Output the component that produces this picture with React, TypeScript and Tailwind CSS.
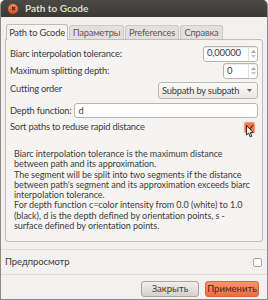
import React from "react";

const font = { fontFamily: "Lato, 'Noto Sans', sans-serif" };

function SpinEntry({ value, width }: { value: string; width: string }) {
  return (
    <div
      className={`flex h-[16px] ${width} rounded-[3px] border border-[#b8b4ae] bg-white shadow-[inset_0_1px_1px_rgba(0,0,0,0.08)]`}
    >
      <div className="flex flex-1 items-center pl-[3px] text-[9.5px] text-[#3c3c3c]">
        {value}
      </div>
      <div className="flex w-[9px] flex-col items-center justify-center gap-[2px] border-l border-[#e2e0dd]">
        <svg width="5" height="3" viewBox="0 0 5 3">
          <path d="M0 3 L2.5 0 L5 3 Z" fill="#a9a6a1" />
        </svg>
        <svg width="5" height="3" viewBox="0 0 5 3">
          <path d="M0 0 L2.5 3 L5 0 Z" fill="#c9c6c1" />
        </svg>
      </div>
    </div>
  );
}

export default function App() {
  return (
    <div
      className="flex h-[300px] w-[268px] flex-col overflow-hidden whitespace-nowrap rounded-t-[5px] border-x border-b border-[#8d8a85] bg-[#f2f1f0] text-[#3c3c3c]"
      style={font}
    >
      {/* Title bar */}
      <div className="flex h-[17px] shrink-0 items-center bg-gradient-to-b from-[#4b4a45] to-[#3a3935] pl-[7px]">
        <div className="flex h-[10px] w-[10px] items-center justify-center rounded-full bg-gradient-to-b from-[#f58a5c] to-[#df4a16]">
          <svg width="5" height="5" viewBox="0 0 5 5">
            <path d="M1 1 L4 4 M4 1 L1 4" stroke="#3c2a20" strokeWidth="1.1" />
          </svg>
        </div>
        <span className="ml-[7px] text-[10px] font-bold text-[#dfdbd2]">
          Path to Gcode
        </span>
      </div>

      {/* Notebook */}
      <div className="mt-[6px] flex flex-col px-[4px]">
        <div className="flex h-[16px] items-end pl-[1px] text-[9.3px] tracking-[-0.2px]">
          <div className="relative z-10 -mb-px flex h-[16px] w-[62px] items-center justify-center rounded-t-[3px] border-x border-t border-[#c0bcb6] bg-[#f5f4f3]">
            Path to Gcode
          </div>
          <div className="ml-px flex h-[14px] w-[55px] items-center justify-center rounded-t-[3px] border-x border-t border-[#cdc9c3] bg-[#e3e1de] text-[#5a5a5a]">
            Параметры
          </div>
          <div className="ml-px flex h-[14px] w-[54px] items-center justify-center rounded-t-[3px] border-x border-t border-[#cdc9c3] bg-[#e3e1de] text-[#5a5a5a]">
            Preferences
          </div>
          <div className="ml-px flex h-[14px] w-[43px] items-center justify-center rounded-t-[3px] border-x border-t border-[#cdc9c3] bg-[#e3e1de] text-[#5a5a5a]">
            Справка
          </div>
        </div>

        <div className="flex h-[203px] flex-col rounded-b-[3px] rounded-tr-[3px] border border-[#c0bcb6] bg-[#f5f4f3] px-[4px] pt-[5px] text-[9.3px] tracking-[-0.2px]">
          <div className="flex h-[17px] items-center justify-between">
            <span>Biarc interpolation tolerance:</span>
            <SpinEntry value="0,00000" width="w-[55px]" />
          </div>
          <div className="mt-[1px] flex h-[16px] items-center justify-between">
            <span>Maximum splitting depth:</span>
            <SpinEntry value="0" width="w-[35px]" />
          </div>
          <div className="mt-[3px] flex h-[17px] items-center justify-between">
            <span className="self-start">Cutting order</span>
            <div className="flex h-[17px] w-[100px] items-center justify-between rounded-[3px] border border-[#bdb9b3] bg-gradient-to-b from-[#fbfbfa] to-[#e9e7e4] pl-[3px] pr-[5px]">
              <span>Subpath by subpath</span>
              <svg width="5" height="3" viewBox="0 0 5 3">
                <path d="M0 0 L2.5 3 L5 0 Z" fill="#6a6864" />
              </svg>
            </div>
          </div>
          <div className="mt-[4px] flex h-[15px] items-center gap-[3px]">
            <span>Depth function:</span>
            <div className="flex h-[15px] flex-1 items-center rounded-[3px] border border-[#b8b4ae] bg-white pl-[3px]">
              d
            </div>
          </div>
          <div className="mt-[3px] flex h-[12px] items-center justify-between">
            <span>Sort paths to reduse rapid distance</span>
            <div className="relative mr-[3px] flex h-[11px] w-[11px] items-center justify-center rounded-[2px] border border-[#e8a48a] bg-[#f07746] shadow-[0_0_2px_#f6b39a]">
              <svg width="8" height="7" viewBox="0 0 8 7">
                <path d="M1 4 L3 6 L7 1" stroke="#5a2c1a" strokeWidth="1.2" fill="none" />
              </svg>
              <svg
                className="absolute left-[1px] top-[2px]"
                width="8"
                height="13"
                viewBox="0 0 8 13"
              >
                <path
                  d="M0.5 0.5 L0.5 10 L2.7 8 L4.3 12 L5.8 11.3 L4.3 7.6 L7.3 7.6 Z"
                  fill="#f2f2f2"
                  stroke="#1a1a1a"
                  strokeWidth="0.9"
                  strokeLinejoin="round"
                />
              </svg>
            </div>
          </div>
          <div className="mt-[16px] pl-[4px] text-[9px] leading-[10.3px] tracking-[-0.05px]">
            Biarc interpolation tolerance is the maximum distance
            <br />
            between path and its approximation.
            <br />
            The segment will be split into two segments if the distance
            <br />
            between path's segment and its approximation exceeds biarc
            <br />
            interpolation tolerance.
            <br />
            For depth function c=color intensity from 0.0 (white) to 1.0
            <br />
            (black), d is the depth defined by orientation points, s -
            <br />
            surface defined by orientation points.
          </div>
        </div>
      </div>

      {/* Preview row */}
      <div className="mt-[7px] border-t border-[#e0ddd9]" />
      <div className="flex h-[24px] items-center justify-between pl-[4px] pr-[5px] text-[9.5px] tracking-[-0.1px]">
        <span>Предпросмотр</span>
        <div className="h-[9px] w-[9px] rounded-[2px] border border-[#a9a6a1] bg-white" />
      </div>
      <div className="border-t border-[#e0ddd9]" />

      {/* Buttons */}
      <div className="mt-[6px] flex justify-end gap-[6px] pr-[8px] text-[9.5px]">
        <div className="flex h-[16px] w-[58px] items-center justify-center rounded-[3px] border border-[#a9a5a0] bg-gradient-to-b from-[#f0efee] to-[#d4d2ce] text-[#3c3c3c]">
          Закрыть
        </div>
        <div className="flex h-[16px] w-[54px] items-center justify-center rounded-[3px] border border-[#d8663a] bg-gradient-to-b from-[#f7956c] to-[#ec6d3c] text-[#3c2a20]">
          Применить
        </div>
      </div>
    </div>
  );
}
